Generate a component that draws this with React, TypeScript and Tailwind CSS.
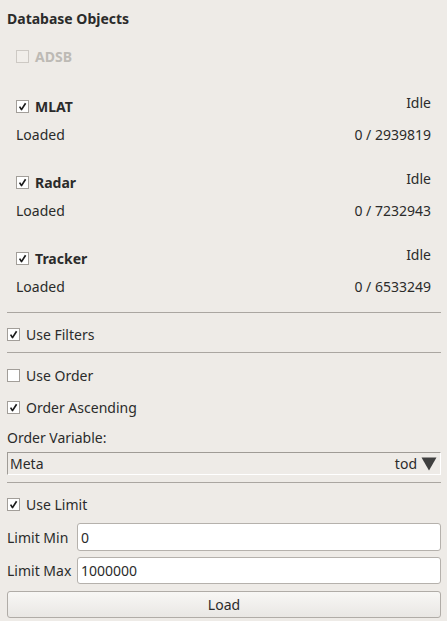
import React from "react";

const font = { fontFamily: '"Noto Sans", "Open Sans", sans-serif' };

function Check({ checked = false, disabled = false }: { checked?: boolean; disabled?: boolean }) {
  return (
    <div
      className={
        "w-[13px] h-[13px] shrink-0 border flex items-center justify-center " +
        (disabled ? "border-[#cdc9c4] bg-[#f1eeea]" : "border-[#a29e99] bg-white")
      }
    >
      {checked && (
        <svg width="9" height="9" viewBox="0 0 9 9">
          <path d="M1.6 4.6 L3.5 7.6 L7.6 1.2" fill="none" stroke="#1c1c1c" strokeWidth="1.7" strokeLinejoin="round" />
        </svg>
      )}
    </div>
  );
}

function DbGroup({ name, total, first = false }: { name: string; total: string; first?: boolean }) {
  return (
    <div className={"flex flex-col pl-[16px] pr-[16px] " + (first ? "mt-[30px]" : "mt-[28px]")}>
      <div className="h-[20px] flex items-center justify-between relative">
        <div className="flex items-center gap-[6px]">
          <Check checked />
          <span className="font-bold text-[14px] text-[#2b2b2b]">{name}</span>
        </div>
        <span className="text-[14px] text-[#2b2b2b] -mt-[8px]">Idle</span>
      </div>
      <div className="h-[20px] mt-[8px] flex items-center justify-between text-[14px] text-[#2b2b2b]">
        <span>Loaded</span>
        <span>0 / {total}</span>
      </div>
    </div>
  );
}

function Sep({ mt }: { mt: string }) {
  return <div className={"h-px bg-[#aaa6a1] mr-[6px] " + mt} />;
}

function CheckRow({ label, checked, mt }: { label: string; checked: boolean; mt: string }) {
  return (
    <div className={"h-[20px] flex items-center gap-[6px] " + mt}>
      <Check checked={checked} />
      <span className="text-[14px] text-[#2b2b2b]">{label}</span>
    </div>
  );
}

export default function App() {
  return (
    <div className="w-[447px] h-[621px] bg-[#eeebe7] overflow-hidden" style={font}>
      <div className="flex flex-col pl-[7px]">
        <div className="h-[36px] flex items-center font-bold text-[14px] text-[#2b2b2b]">Database Objects</div>
        <div className="h-[20px] mt-[10px] pl-[9px] flex items-center gap-[6px]">
          <Check disabled />
          <span className="font-bold text-[14px] text-[#bdbab5]">ADSB</span>
        </div>
        <div className="-ml-[7px] flex flex-col">
          <DbGroup name="MLAT" total="2939819" first />
          <DbGroup name="Radar" total="7232943" />
          <DbGroup name="Tracker" total="6533249" />
        </div>
        <Sep mt="mt-[16px]" />
        <CheckRow label="Use Filters" checked mt="mt-[11px]" />
        <Sep mt="mt-[8px]" />
        <CheckRow label="Use Order" checked={false} mt="mt-[12px]" />
        <CheckRow label="Order Ascending" checked mt="mt-[12px]" />
        <div className="h-[20px] mt-[10px] flex items-center text-[14px] text-[#2b2b2b]">Order Variable:</div>
        <div className="h-[23px] mt-[5px] mr-[6px] flex items-center justify-between border-t border-l border-[#9f9b96] border-b border-b-white border-r border-r-white pl-[2px] pr-[3px] text-[14px] text-[#2b2b2b]">
          <span>Meta</span>
          <div className="flex items-center gap-[4px]">
            <span>tod</span>
            <svg width="16" height="14" viewBox="0 0 16 14">
              <path d="M0.5 0.5 L15.5 0.5 L8 13.5 Z" fill="#3f3f3f" />
            </svg>
          </div>
        </div>
        <Sep mt="mt-[7px]" />
        <CheckRow label="Use Limit" checked mt="mt-[11px]" />
        <div className="h-[28px] mt-[9px] mr-[6px] flex items-center">
          <span className="w-[70px] text-[14px] text-[#2b2b2b]">Limit Min</span>
          <div className="flex-1 h-full bg-white border border-[#b5b1ac] rounded-[3px] flex items-center pl-[3px] text-[14px] text-[#2b2b2b]">0</div>
        </div>
        <div className="h-[27px] mt-[6px] mr-[6px] flex items-center">
          <span className="w-[70px] text-[14px] text-[#2b2b2b]">Limit Max</span>
          <div className="flex-1 h-full bg-white border border-[#b5b1ac] rounded-[3px] flex items-center pl-[3px] text-[14px] text-[#2b2b2b]">1000000</div>
        </div>
        <div className="h-[27px] mt-[7px] mr-[6px] border border-[#b0aca7] rounded-[3px] bg-gradient-to-b from-[#f8f7f5] to-[#e9e7e4] flex items-center justify-center text-[14px] text-[#2b2b2b]">
          Load
        </div>
      </div>
    </div>
  );
}
